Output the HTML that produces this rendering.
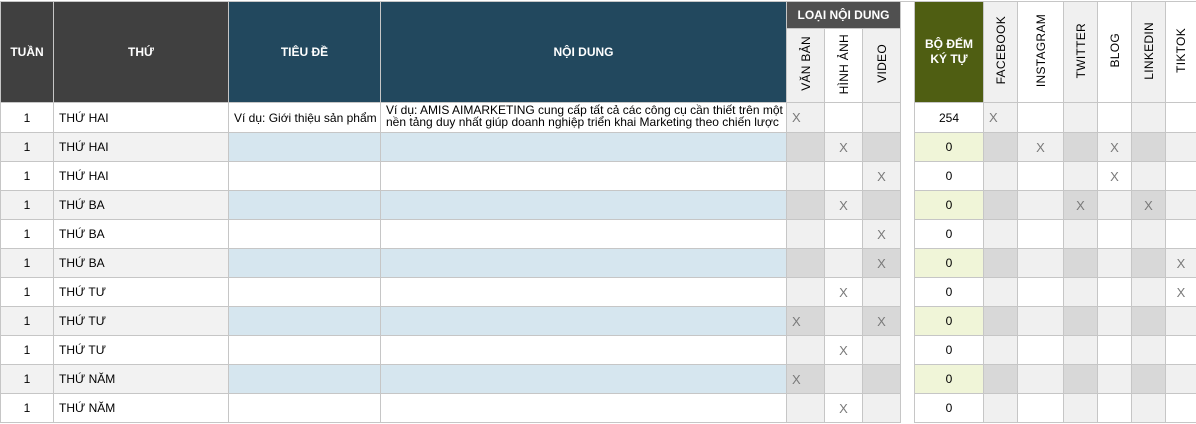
<!DOCTYPE html>
<html><head><meta charset="utf-8">
<style>
html,body{margin:0;padding:0;background:#fff;width:1196px;height:424px;overflow:hidden}
table{border-collapse:collapse;table-layout:fixed;font-family:"Liberation Sans",Arial,sans-serif;font-size:12px;color:#000}
td{border:1px solid #c6c6c6;padding:0;height:28px;text-align:center;white-space:nowrap;overflow:hidden}
.h{color:#fff;font-weight:bold;font-size:12px}
.dk{background:#404040}
.bl{background:#22485e}
.ol{background:#4f5e12;color:#fff;font-weight:bold;line-height:15px}
.gy{background:#f0f0f0}
.g2{background:#d8d8d8}
.lb{background:#d6e6ef}
.cy{background:#f0f5d8}
.sh{background:#f2f2f2}
.l{text-align:left;padding-left:5px}
.x{color:#7a7a7a;font-size:13px}
.gap{border-top:none;border-bottom:none;background:#fff}
.v{display:inline-block;writing-mode:vertical-rl;transform:rotate(180deg);color:#000;font-weight:normal;font-size:12px;letter-spacing:0.3px}
.vh{height:72px;vertical-align:middle}
</style></head><body>
<table style="width:1196px;margin-top:1px">
<colgroup>
<col style="width:53px"><col style="width:175px"><col style="width:152px"><col style="width:406px">
<col style="width:38px"><col style="width:38px"><col style="width:38px"><col style="width:14px">
<col style="width:69px"><col style="width:34px"><col style="width:46px"><col style="width:34px"><col style="width:34px"><col style="width:34px"><col style="width:31px">
</colgroup>
<tr>
<td rowspan="2" class="h dk" style="height:100px">TUẦN</td>
<td rowspan="2" class="h dk">THỨ</td>
<td rowspan="2" class="h bl">TIÊU ĐỀ</td>
<td rowspan="2" class="h bl">NỘI DUNG</td>
<td colspan="3" class="h" style="background:#505050;height:25px">LOẠI NỘI DUNG</td>
<td rowspan="2" class="gap" style="border-top:1px solid #c6c6c6"></td>
<td rowspan="2" class="ol">BỘ ĐẾM<br>KÝ TỰ</td>
<td rowspan="2" class="gy"><span class="v">FACEBOOK</span></td>
<td rowspan="2"><span class="v">INSTAGRAM</span></td>
<td rowspan="2" class="gy"><span class="v">TWITTER</span></td>
<td rowspan="2"><span class="v">BLOG</span></td>
<td rowspan="2" class="gy"><span class="v">LINKEDIN</span></td>
<td rowspan="2"><span class="v">TIKTOK</span></td>
</tr>
<tr>
<td class="gy vh"><span class="v">VĂN BẢN</span></td>
<td class="vh"><span class="v">HÌNH ẢNH</span></td>
<td class="gy vh"><span class="v">VIDEO</span></td>
</tr>
<tr>
<td>1</td><td class="l">THỨ HAI</td><td class="l">Ví dụ: Giới thiệu sản phẩm</td>
<td class="l" style="white-space:normal;line-height:12px;vertical-align:top;padding-top:1px">Ví dụ: AMIS AIMARKETING cung cấp tất cả các công cụ cần thiết trên một nền tảng duy nhất giúp doanh nghiệp triển khai Marketing theo chiến lược</td>
<td class="gy x l">X</td><td></td><td class="gy"></td><td class="gap"></td><td>254</td>
<td class="gy x l">X</td><td></td><td class="gy"></td><td></td><td class="gy"></td><td></td>
</tr>
<tr class="sh">
<td class="sh">1</td><td class="l sh">THỨ HAI</td><td class="lb"></td><td class="lb"></td>
<td class="g2"></td><td class="gy x">X</td><td class="g2"></td><td class="gap"></td><td class="cy">0</td>
<td class="g2"></td><td class="gy x">X</td><td class="g2"></td><td class="gy x">X</td><td class="g2"></td><td class="gy"></td>
</tr>
<tr>
<td>1</td><td class="l">THỨ HAI</td><td></td><td></td>
<td class="gy"></td><td></td><td class="gy x">X</td><td class="gap"></td><td>0</td>
<td class="gy"></td><td></td><td class="gy"></td><td class="x">X</td><td class="gy"></td><td></td>
</tr>
<tr>
<td class="sh">1</td><td class="l sh">THỨ BA</td><td class="lb"></td><td class="lb"></td>
<td class="g2"></td><td class="gy x">X</td><td class="g2"></td><td class="gap"></td><td class="cy">0</td>
<td class="g2"></td><td class="gy"></td><td class="g2 x">X</td><td class="gy"></td><td class="g2 x">X</td><td class="gy"></td>
</tr>
<tr>
<td>1</td><td class="l">THỨ BA</td><td></td><td></td>
<td class="gy"></td><td></td><td class="gy x">X</td><td class="gap"></td><td>0</td>
<td class="gy"></td><td></td><td class="gy"></td><td></td><td class="gy"></td><td></td>
</tr>
<tr>
<td class="sh">1</td><td class="l sh">THỨ BA</td><td class="lb"></td><td class="lb"></td>
<td class="g2"></td><td class="gy"></td><td class="g2 x">X</td><td class="gap"></td><td class="cy">0</td>
<td class="g2"></td><td class="gy"></td><td class="g2"></td><td class="gy"></td><td class="g2"></td><td class="gy x">X</td>
</tr>
<tr>
<td>1</td><td class="l">THỨ TƯ</td><td></td><td></td>
<td class="gy"></td><td class="x">X</td><td class="gy"></td><td class="gap"></td><td>0</td>
<td class="gy"></td><td></td><td class="gy"></td><td></td><td class="gy"></td><td class="x">X</td>
</tr>
<tr>
<td class="sh">1</td><td class="l sh">THỨ TƯ</td><td class="lb"></td><td class="lb"></td>
<td class="g2 x l">X</td><td class="gy"></td><td class="g2 x">X</td><td class="gap"></td><td class="cy">0</td>
<td class="g2"></td><td class="gy"></td><td class="g2"></td><td class="gy"></td><td class="g2"></td><td class="gy"></td>
</tr>
<tr>
<td>1</td><td class="l">THỨ TƯ</td><td></td><td></td>
<td class="gy"></td><td class="x">X</td><td class="gy"></td><td class="gap"></td><td>0</td>
<td class="gy"></td><td></td><td class="gy"></td><td></td><td class="gy"></td><td></td>
</tr>
<tr>
<td class="sh">1</td><td class="l sh">THỨ NĂM</td><td class="lb"></td><td class="lb"></td>
<td class="g2 x l">X</td><td class="gy"></td><td class="g2"></td><td class="gap"></td><td class="cy">0</td>
<td class="g2"></td><td class="gy"></td><td class="g2"></td><td class="gy"></td><td class="g2"></td><td class="gy"></td>
</tr>
<tr>
<td>1</td><td class="l">THỨ NĂM</td><td></td><td></td>
<td class="gy"></td><td class="x">X</td><td class="gy"></td><td class="gap"></td><td>0</td>
<td class="gy"></td><td></td><td class="gy"></td><td></td><td class="gy"></td><td></td>
</tr>
</table>
</body></html>
